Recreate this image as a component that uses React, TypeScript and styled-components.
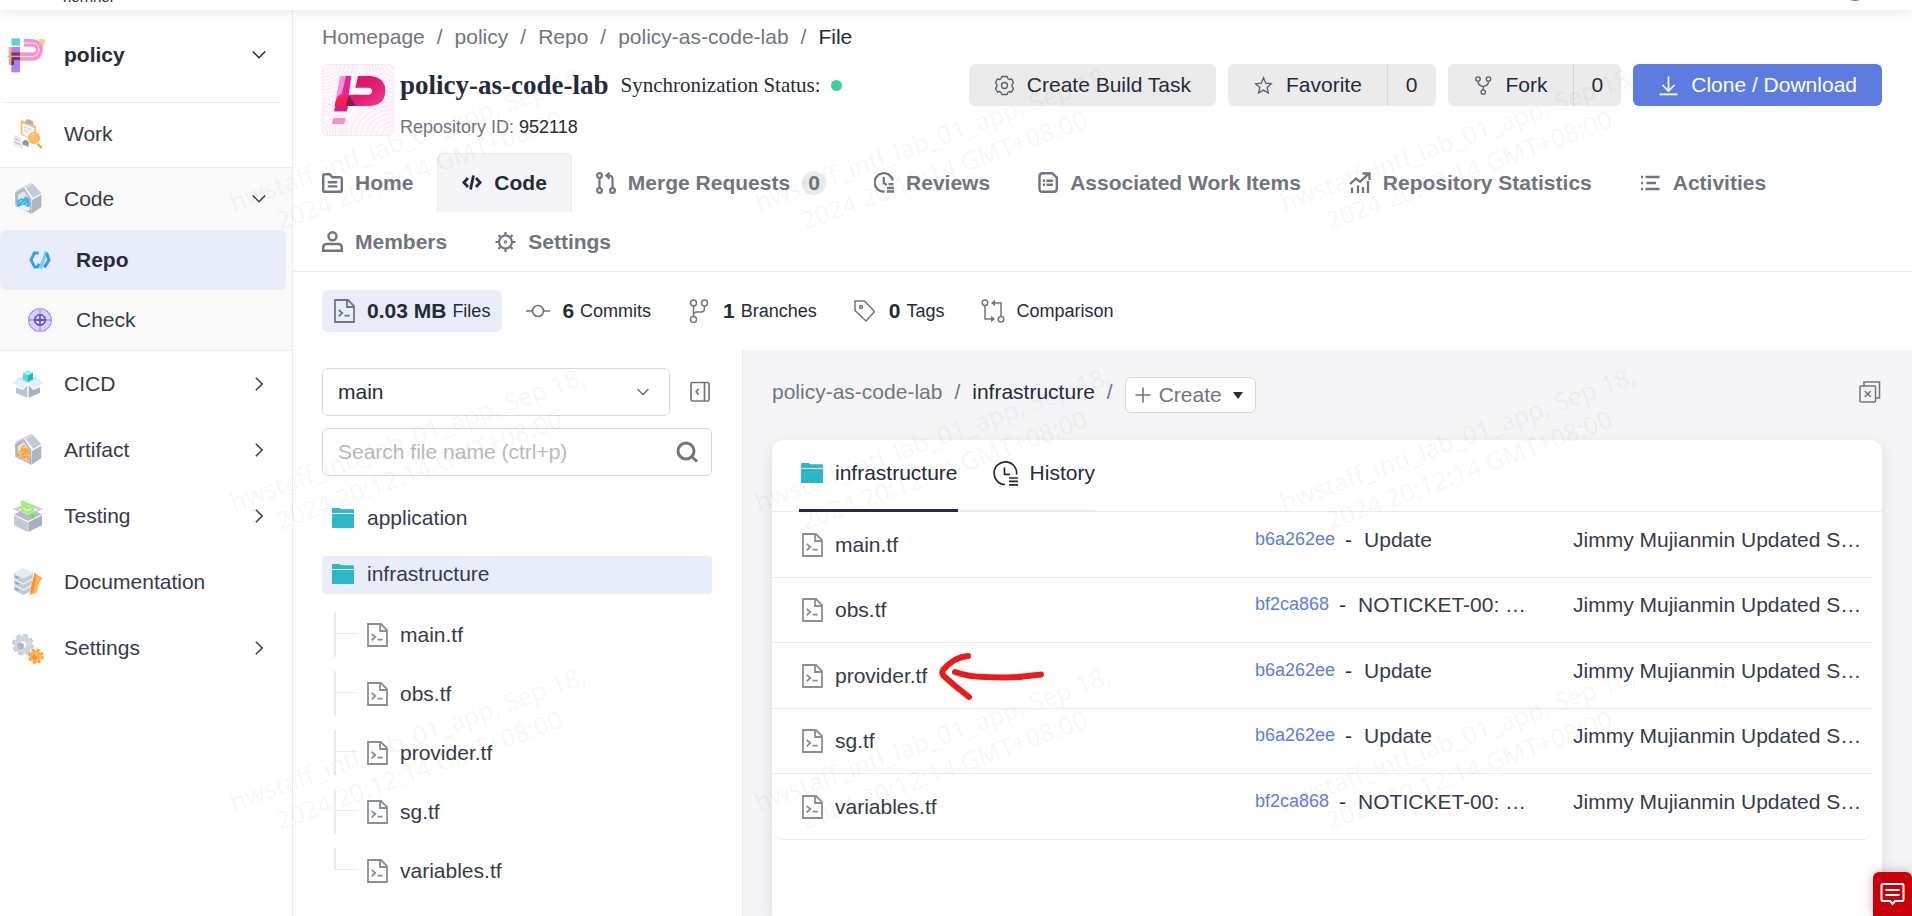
import React from "react";
import styled, { createGlobalStyle, css } from "styled-components";

const ink = "#252b3a";
const body = "#353b4a";
const muted = "#71757f";
const line = "#ebebf0";
const brand = "#5e7ce0";
const tint = "#e9edfa";
const panel = "#f5f5f8";

const Global = createGlobalStyle`
  *, *::before, *::after { box-sizing: border-box; }
  body {
    margin: 0;
    background: #fff;
    color: ${ink};
    font-family: "Liberation Sans", Arial, sans-serif;
    font-size: 21px;
    line-height: 30px;
  }
  a { color: inherit; text-decoration: none; }
  button, input, select { font: inherit; color: inherit; margin: 0; }
  button { border: 0; background: none; padding: 0; cursor: pointer; }
  svg { display: block; flex: none; }
  ul, ol { list-style: none; margin: 0; padding: 0; }
`;

/* ---------- shell ---------- */

const Page = styled.div`
  position: relative;
  display: flex;
  flex-direction: column;
  min-height: 100vh;
  overflow: hidden;
`;

const TopBar = styled.header`
  height: 10px;
  background: #fff;
  box-shadow: 0 2px 12px rgba(37, 43, 58, 0.12);
  z-index: 1;
`;

const TopBarInner = styled.div`
  display: flex;
  justify-content: space-between;
  align-items: flex-end;
  height: 2px;
  padding: 0 45px 0 63px;
  overflow: hidden;
  font-size: 15px;
  line-height: 10px;
`;

const Avatar = styled.span`
  width: 24px;
  height: 24px;
  border-radius: 50%;
  background: ${brand};
  margin-bottom: 1px;
`;

const Shell = styled.div`
  display: flex;
  flex: 1;
`;

/* ---------- sidebar ---------- */

const Sidebar = styled.nav`
  flex: none;
  width: 293px;
  border-right: 1px solid ${line};
`;

const Project = styled.button`
  display: flex;
  align-items: center;
  gap: 18px;
  width: 276px;
  height: 93px;
  margin-left: 4px;
  padding: 0 14px 3px 2px;
  border-bottom: 1px solid ${line};
  font-weight: 700;
  text-align: left;
`;

const ItemLabel = styled.span`
  flex: 1;
`;

const NavItem = styled.a<{ $h?: number }>`
  display: flex;
  align-items: center;
  gap: 20px;
  height: ${(p) => p.$h ?? 66}px;
  padding: 0 26px 0 12px;
  color: ${body};
`;

const NavGroup = styled.div`
  margin-top: 2px;
  border-top: 1px solid ${line};
  border-bottom: 1px solid ${line};
  background: #fafafa;
`;

const SubItem = styled.a<{ $active?: boolean }>`
  display: flex;
  align-items: center;
  gap: 24px;
  height: 60px;
  margin-right: 6px;
  padding-left: 28px;
  border-radius: 6px;
  color: ${body};
  ${(p) => p.$active && css`background: ${tint}; color: ${ink}; font-weight: 700;`}
`;

/* ---------- repository head ---------- */

const Main = styled.main`
  display: flex;
  flex-direction: column;
  flex: 1;
  min-width: 0;
`;

const Head = styled.div`
  padding: 12px 30px 0 29px;
  border-bottom: 1px solid ${line};
`;

const Crumbs = styled.ol`
  display: flex;
  align-items: center;
  color: ${muted};
  li + li::before { content: "/"; margin: 0 12px; color: ${muted}; }
  [aria-current] { color: ${ink}; }
`;

const TitleRow = styled.div`
  display: flex;
  justify-content: space-between;
  align-items: flex-start;
  margin-top: 12px;
`;

const Identity = styled.div`
  display: flex;
  gap: 6px;
`;

const TitleLine = styled.div`
  display: flex;
  align-items: center;
  height: 42px;
  font-family: "Liberation Serif", "Times New Roman", serif;
`;

const RepoName = styled.h1`
  margin: 0 12px 0 0;
  font-size: 27px;
`;

const StatusDot = styled.span`
  width: 11px;
  height: 11px;
  margin-left: 10px;
  border-radius: 50%;
  background: #3dcca6;
`;

const RepoId = styled.p`
  margin: 6px 0 0;
  font-size: 18px;
  color: ${muted};
  b { color: ${ink}; font-weight: 400; }
`;

const Actions = styled.div`
  display: flex;
  gap: 12px;
`;

const ActionGroup = styled.div`
  display: flex;
  border-radius: 6px;
  overflow: hidden;
`;

const ActionButton = styled.button<{ $primary?: boolean }>`
  display: flex;
  align-items: center;
  gap: 12px;
  height: 42px;
  padding: 0 25px;
  background: ${(p) => (p.$primary ? brand : "#ebebeb")};
  color: ${(p) => (p.$primary ? "#fff" : ink)};
  white-space: nowrap;
  svg { color: ${(p) => (p.$primary ? "#fff" : "#575d6c")}; }
`;

const CountButton = styled.button`
  height: 42px;
  padding: 0 18px;
  border-left: 1px solid #d7d8da;
  background: #ebebeb;
`;

const Tabs = styled.nav`
  display: flex;
  flex-wrap: wrap;
  margin: 11px 0 0 -24px;
`;

const Tab = styled.a<{ $active?: boolean }>`
  display: flex;
  align-items: center;
  gap: 12px;
  height: 59px;
  padding: 0 24px;
  color: ${(p) => (p.$active ? ink : muted)};
  font-weight: 700;
  ${(p) => p.$active && css`
    border: 1px solid ${line};
    border-bottom: 0;
    border-radius: 6px 6px 0 0;
    background: ${panel};
  `}
`;

const Badge = styled.span`
  width: 24px;
  height: 24px;
  border-radius: 12px;
  background: #ebebeb;
  line-height: 24px;
  text-align: center;
`;

const Stats = styled.div`
  display: flex;
  gap: 12px;
  padding: 18px 29px;
`;

const Stat = styled.a<{ $active?: boolean }>`
  display: flex;
  align-items: center;
  height: 42px;
  padding: 0 12px;
  border-radius: 6px;
  font-size: 18px;
  background: ${(p) => (p.$active ? tint : "none")};
  color: ${ink};
  svg { margin-right: 12px; color: ${muted}; }
  b { margin-right: 6px; font-size: 21px; }
`;

/* ---------- file tree ---------- */

const Columns = styled.div`
  display: flex;
  flex: 1;
`;

const TreePane = styled.aside`
  flex: none;
  width: 449px;
  padding: 18px 30px 18px 29px;
`;

const BranchRow = styled.div`
  display: flex;
  align-items: center;
  gap: 20px;
`;

const Field = styled.div`
  position: relative;
  flex: 1;
  height: 48px;
  color: ${muted};
  > svg { position: absolute; right: 20px; top: 50%; transform: translateY(-50%); pointer-events: none; }
  & > svg.search { right: 14px; }
`;

const controlStyle = css`
  width: 100%;
  height: 48px;
  padding: 0 15px;
  border: 1px solid #d7d8da;
  border-radius: 6px;
  background: #fff;
  color: ${ink};
  outline: 0;
`;

const BranchSelect = styled.select`
  ${controlStyle}
  appearance: none;
`;

const SearchInput = styled.input`
  ${controlStyle}
  &::placeholder { color: #b8babf; opacity: 1; }
`;

const SearchField = styled(Field)`
  margin-top: 12px;
`;

const Folders = styled.ul`
  display: flex;
  flex-direction: column;
  gap: 19px;
  margin-top: 23px;
  color: ${body};
`;

const FolderRow = styled.a<{ $active?: boolean }>`
  display: flex;
  align-items: center;
  gap: 13px;
  height: 38px;
  padding-left: 10px;
  border-radius: 4px;
  ${(p) => p.$active && css`background: ${tint}; border-bottom: 2px solid #ededf2;`}
`;

const Files = styled.ul`
  display: flex;
  flex-direction: column;
  gap: 14px;
  margin: 18px 0 0 12px;
`;

const FileNode = styled.li`
  display: flex;
  height: 45px;
  border-left: 2px solid ${line};
  &::before {
    content: "";
    width: 22px;
    height: 22px;
    margin-right: 9px;
    border-bottom: 1px solid ${line};
  }
  &:last-child { border-image: linear-gradient(${line} 22px, transparent 22px) 1; border-width: 0 0 0 2px; }
  a { display: flex; align-items: center; gap: 12px; }
`;

/* ---------- listing ---------- */

const Browser = styled.section`
  display: flex;
  flex-direction: column;
  flex: 1;
  min-width: 0;
  padding: 27px 30px 0 29px;
  border-left: 1px solid ${line};
  background: ${panel};
`;

const PathBar = styled.div`
  display: flex;
  justify-content: space-between;
  align-items: flex-start;
`;

const PathLine = styled.div`
  display: flex;
  align-items: flex-start;
`;

const PathEnd = styled.span`
  margin: 0 12px;
  color: ${muted};
`;

const CreateButton = styled.button`
  display: flex;
  align-items: center;
  height: 36px;
  padding: 0 12px 0 9px;
  border: 1px solid #d7d8da;
  border-radius: 6px;
  background: #fff;
  color: ${muted};
  span { margin: 0 11px 0 8px; }
`;

const IconButton = styled.button`
  color: ${muted};
`;

const CloseAll = styled(IconButton)`
  padding: 4px 1px 0 0;
`;

const Card = styled.div`
  flex: 1;
  margin-top: 27px;
  border-radius: 12px 12px 0 0;
  background: #fff;
  box-shadow: 0 6px 15px rgba(37, 43, 58, 0.12);
`;

const CardTabs = styled.div`
  display: flex;
  height: 72px;
  padding-left: 27px;
  border-bottom: 1px solid ${line};
`;

const CardTab = styled.button<{ $active?: boolean }>`
  display: flex;
  align-items: center;
  gap: 12px;
  height: 72px;
  padding-bottom: ${(p) => (p.$active ? 3 : 4)}px;
  padding-left: ${(p) => (p.$active ? 2 : 35)}px;
  border-bottom: ${(p) => (p.$active ? `3px solid ${ink}` : `2px solid ${line}`)};
  color: ${ink};
`;

const FileTable = styled.table`
  width: calc(100% - 9px);
  table-layout: fixed;
  border-spacing: 0;
  color: ${body};
`;

const Row = styled.tr`
  height: 66px;
  &:nth-child(even) { height: 65px; }
  td { padding: 0; border-bottom: 1px solid ${line}; white-space: nowrap; vertical-align: middle; }
  &:last-child td:first-child { border-bottom-left-radius: 12px; }
  &:last-child td:last-child { border-bottom-right-radius: 12px; }
`;

const CommitCol = styled.col`
  width: 318px;
`;

const UpdatedCol = styled.col`
  width: 300px;
`;

const FileCell = styled.a`
  position: relative;
  display: flex;
  align-items: center;
  gap: 12px;
  width: max-content;
  margin-left: 30px;
`;

const Arrow = styled.svg`
  position: absolute;
  left: calc(100% + 12px);
  top: -9px;
  overflow: visible;
`;

const Commit = styled.div`
  display: flex;
  align-items: center;
  padding-bottom: 10px;
  a { font-size: 18px; color: ${brand}; margin-top: -2px; }
  i { margin: 0 12px 0 10px; font-style: normal; color: ${ink}; }
`;

const Updated = styled.div`
  padding-bottom: 10px;
`;

/* ---------- overlays ---------- */

const Watermarks = styled.div`
  position: absolute;
  left: 151px;
  top: 4px;
  display: grid;
  grid-template-columns: repeat(3, 525px);
  grid-auto-rows: 300px;
  place-items: center;
  z-index: 3;
  pointer-events: none;
  user-select: none;
`;

const Mark = styled.span`
  color: rgba(0, 0, 0, 0.055);
  font-family: "Noto Sans", "Open Sans", sans-serif;
  font-size: 25px;
  line-height: 33px;
  text-align: center;
  white-space: pre;
  transform: rotate(-20deg);
`;

const Feedback = styled.button`
  position: fixed;
  right: 0;
  bottom: 0;
  z-index: 4;
  display: grid;
  place-items: center;
  width: 39px;
  height: 44px;
  border-radius: 6px 6px 0 0;
  background: #c7000b;
  color: #fff;
  box-shadow: 0 0 12px rgba(0, 0, 0, 0.25);
`;

/* ---------- icons ---------- */

const Svg = ({ w = 20, h = w, vb, sw = 2, children }: { w?: number; h?: number; vb?: string; sw?: number; children: React.ReactNode }) => (
  <svg width={w} height={h} viewBox={vb ?? `0 0 ${w} ${h}`} fill="none" stroke="currentColor" strokeWidth={sw} aria-hidden="true">
    {children}
  </svg>
);

const Chevron = ({ down }: { down?: boolean }) => (
  <Svg w={14} h={14} sw={1.5}>
    <path d={down ? "M.8 3.500 7 9.800l6.200-6.300" : "M3.800 .8 10.200 7l-6.400 6.200"} />
  </Svg>
);

const FileIcon = ({ color = "#8a8e99" }: { color?: string }) => (
  <svg width="21" height="24" viewBox="0 0 21 24" fill="none" stroke={color} strokeWidth="1.8" aria-hidden="true">
    <path d="M1 1h13l6 6v16H1zM13 1v7h7M4.700 10.800 8.300 14l-3.600 3.400M10.500 16.600h5.200" />
  </svg>
);

const FolderIcon = () => (
  <svg width="22" height="20" viewBox="0 0 22 20" fill="#2db7c8" aria-hidden="true">
    <path d="M0 .5Q0 0 .5 0h7.300l1.400 1.200h12.300q.5 0 .5.5V5H0zM0 6h22v13.400q0 .6-.6.6H.6q-.6 0-.6-.6z" />
  </svg>
);

const PolicyLogo = () => (
  <svg width="40" height="40" viewBox="20 104 120 120" aria-hidden="true">
    <path d="M118 116q12-2 20 4-4 20-16 30z" fill="#e8d67a" />
    <path d="M28 140h8v55h-8z" fill="#f4a98a" />
    <path d="M36 114h26v22H36z" fill="#62d3de" />
    <path d="M36 140h26v76H36z" fill="#b07ff2" />
    <path d="M74 116h26q30 4 31 32-2 30-32 33H36v-25h64q10-1 10-8t-10-9H74z" fill="#ff8fcb" />
    <path d="M74 128h26q18 3 19 20-2 18-20 21H62" fill="none" stroke="#fff" strokeWidth="3" />
    <path d="M36 156h26v24H36z" fill="#8f2d74" />
    <path d="M36 180h8v14h-8z" fill="#5b2f86" />
    <path d="M24 168h38" stroke="#9ed36a" strokeWidth="4" />
  </svg>
);

const WorkIcon = () => (
  <svg width="32" height="32" viewBox="36 352 96 96" aria-hidden="true">
    <path d="M62 358l46 18v44l-46-18z" fill="#f9b765" />
    <path d="M67 367l36 14v36l-36-16z" fill="#f3f5fa" />
    <path d="M76 360q6-8 16-2l8 6v10l-22-8z" fill="#a9afbb" />
    <path d="M72 378l22 10M72 388l14 6" stroke="#c9cfda" strokeWidth="3" />
    <path d="M42 402l26 12v32l-28-12z" fill="#e6edf8" />
    <path d="M44 414l14 6M44 424l18 8" stroke="#b5bcc9" strokeWidth="3" />
    <path d="M68 424q8-14 18 0v14l-18-6z" fill="#8e96a6" />
    <circle cx="102" cy="412" r="16" fill="#ffc069" stroke="#ffaf4a" strokeWidth="4" />
    <path d="M92 406q6-10 14-8" fill="none" stroke="#ffe2b3" strokeWidth="3" />
    <path d="M112 429l13 13" stroke="#fba63c" strokeWidth="7" />
  </svg>
);

const House = () => (
  <>
    <path d="M45 580l27-18 22 34v46l-48-24z" fill="#b0b7c5" />
    <path d="M54 586l18-12 16 24v36l-34-18z" fill="#e1e5ed" />
    <path d="M45 579l5-8 42-20 7 2-26 11z" fill="#ccd2dd" />
    <path d="M77 565l22-12 25 28-24 14z" fill="#c3cad8" />
    <path d="M96 601l28-16v37l-30 21z" fill="#adb4c3" />
    <path d="M73 564l23 34 28-16" fill="none" stroke="#f4f6fa" strokeWidth="3" />
  </>
);

const CodeIcon = () => (
  <svg width="32" height="32" viewBox="36 550 96 96" aria-hidden="true">
    <House />
    <path d="M52 602l12-6 6 2 6-8 12 8v22l-18 8-18-10z" fill="#3fb4ec" />
    <path d="M56 608l10-6M66 613l10-8M73 618l9-6" stroke="#b7e6fb" strokeWidth="3" />
    <path d="M54 622l16-6 20 8-4 10-12-2z" fill="#e9f7fe" />
  </svg>
);

const ArtifactIcon = () => (
  <svg width="32" height="32" viewBox="36 550 96 96" aria-hidden="true">
    <House />
    <path d="M52 604l10-6v-10l10-5 16 16v32l-18-8-18-8z" fill="#ffa63d" />
    <path d="M52 604l9 4 9-5M70 616l9-5 9 5M61 608v10M79 620v10M62 588l9 4 8-3" stroke="#ffd9a3" strokeWidth="3" fill="none" />
  </svg>
);

const CicdIcon = () => (
  <svg width="32" height="32" viewBox="36 90 96 96" aria-hidden="true">
    <path d="M48 148l20 8 14-14v37l-34-14z" fill="#bcc4d1" />
    <path d="M120 148l-20 8-14-14v37l34-14z" fill="#a9b1c0" />
    <path d="M52 122l32 14 32-14-32-10z" fill="#d4dae5" />
    <path d="M38 136l14-15 31 15-15 18zM130 136l-14-15-31 15 15 18z" fill="#e6eefa" />
    <path d="M84 96l15 8-15 8-15-8z" fill="#9df2ec" />
    <path d="M69 104l15 8v20l-15-8z" fill="#4fdcd6" />
    <path d="M99 104l-15 8v20l15-8z" fill="#17bfc4" />
  </svg>
);

const TestingIcon = () => (
  <svg width="32" height="34" viewBox="36 482 96 102" aria-hidden="true">
    <path d="M84 496l38 16-38 18-38-18z" fill="#fff" stroke="#c3cad6" strokeWidth="5" />
    <path d="M42 528l42-18 42 18-42 20z" fill="#b4bbc9" />
    <path d="M84 500l34 13-34 16-34-16z" fill="#fff" stroke="#c9cfda" strokeWidth="5" />
    <path d="M42 531l41 21v29l-41-20z" fill="#c3cad6" />
    <path d="M126 531l-41 21v29l41-20z" fill="#a8b0bf" />
    <path d="M63 484l39 18v22l-12 6-27-12z" fill="#a6ec78" />
    <path d="M90 530l12-5v18z" fill="#7fd34c" />
    <path d="M71 510q12 12 22 2" fill="none" stroke="#f4ffe9" strokeWidth="4" />
  </svg>
);

const DocsIcon = () => (
  <svg width="32" height="32" viewBox="36 682 96 96" aria-hidden="true">
    {[740, 722, 704].map((y) => (
      <g key={y}>
        <path d={`M42 ${y}l28 12 28-12v14l-28 16-28-16z`} fill="#c3cad6" />
        <path d={`M70 ${y - 16}l28 14v4l-28 14-28-14v-4z`} fill="#e4ecf8" />
        <path d={`M46 ${y + 9}l10 5`} stroke="#8e96a6" strokeWidth="4" />
      </g>
    ))}
    <path d="M103 700l28 17-19 46-26 9z" fill="#fff" />
    <path d="M104 703l24 15-10 14-8 30-20 7 8-14z" fill="#ffb45a" />
    <path d="M104 703l4 3-6 48-13 15 4-24z" fill="#ff8f22" />
  </svg>
);

const GearsIcon = () => (
  <svg width="32" height="33" viewBox="36 876 99 102" fill="none" aria-hidden="true">
    <circle cx="70" cy="915" r="28" stroke="#c3cad8" strokeWidth="11" strokeDasharray="14 8" />
    <circle cx="70" cy="915" r="19" stroke="#d0d6e1" strokeWidth="18" />
    <circle cx="63" cy="919" r="10" fill="#aeb6c5" />
    <circle cx="110" cy="951" r="20" stroke="#fb9a35" strokeWidth="8" strokeDasharray="9 6.7" />
    <circle cx="109" cy="951" r="12" stroke="#ffb04f" strokeWidth="14" />
    <circle cx="106" cy="954" r="7" fill="#f58a1f" />
  </svg>
);

const RepoIcon = () => (
  <svg width="24" height="24" viewBox="84 742 72 72" fill="none" strokeWidth="9" aria-hidden="true">
    <path d="M116 757h-13l-10 21 11 21h8l6-10" stroke="#33a3e6" />
    <path d="M139 752l-18 52" stroke="#6fd0fb" strokeWidth="10" />
    <path d="M140 758l7 20-14 22" stroke="#2b9be4" />
  </svg>
);

const CheckIcon = () => (
  <svg width="24" height="24" viewBox="84 924 72 72" fill="none" aria-hidden="true">
    <circle cx="120" cy="960" r="34" fill="#dccff8" stroke="#a49cf2" strokeWidth="4" />
    <path d="M120 926v68M86 960h68" stroke="#9d96ee" strokeWidth="4" />
    <circle cx="120" cy="960" r="16" stroke="#4b41b6" strokeWidth="4" />
    <path d="M120 944v32M104 960h32" stroke="#4b41b6" strokeWidth="4" />
  </svg>
);

const RepoLogo = () => (
  <svg width="72" height="72" viewBox="966 192 216 216" aria-hidden="true">
    <defs>
      <clipPath id="tile"><rect x="966" y="192" width="216" height="216" rx="16" /></clipPath>
      <linearGradient id="bowl" x1="0" y1="0" x2="1" y2="1">
        <stop offset="0" stopColor="#c91b70" />
        <stop offset=".5" stopColor="#e11a6e" />
        <stop offset="1" stopColor="#ee3f96" />
      </linearGradient>
    </defs>
    <rect x="967" y="193" width="214" height="214" rx="16" fill="#fef8fc" stroke="#f9e3f3" strokeWidth="3" />
    <g clipPath="url(#tile)" fill="none" stroke="#fbe4f3" strokeWidth="3">
      {[20, 32, 44, 56, 68, 80, 92, 104].map((r) => (
        <g key={r}>
          <ellipse cx="966" cy="196" rx={r} ry={r * 0.8} />
          <ellipse cx="1186" cy="408" rx={r * 1.3} ry={r} />
          <ellipse cx="1180" cy="186" rx={r * 0.8} ry={r} />
          <ellipse cx="968" cy="400" rx={r * 0.7} ry={r} />
        </g>
      ))}
    </g>
    <path d="M1022 228h32l-14 106h-37l9-56z" fill="#e0279a" />
    <path d="M1020 228h18l-12 52-16 12z" fill="#f592cd" />
    <path d="M1074 228h36q46 4 46 44 0 42-46 46h-74l12-34h58q10-1 10-11 0-9-10-10h-40z" fill="url(#bowl)" />
    <path d="M1008 300l36-18-8 36h-33z" fill="#fb2049" />
    <path d="M1046 284l22 34h-30z" fill="#7d1f50" />
    <path d="M1037 318h7l-3 16h-38l3-16z" fill="#c82391" />
    <path d="M1000 354h37l-4 18h-37z" fill="#f592cd" />
  </svg>
);

const HomeIcon = () => (
  <Svg w={21} h={20} sw={2.4}><path d="M1.200 17V2.800Q1.200 1.200 2.800 1.200h5l2.600 3h7.700Q19.800 4.200 19.800 5.800v11.400q0 1.600-1.600 1.600H2.800Q1.200 18.800 1.200 17.200zM5.800 9.200h9.400M5.800 13.400h9.400" /></Svg>
);
const CodeTabIcon = () => (
  <Svg w={20} h={20} sw={2.8}><path d="M6 5 1.800 9.500 6 14M14 5l4.200 4.500L14 14M11.500 2.500l-3 14" /></Svg>
);
const MergeIcon = () => (
  <Svg w={20} h={22} sw={2.2}><circle cx="3.500" cy="3.500" r="2.400" /><circle cx="3.500" cy="18.500" r="2.400" /><circle cx="16.500" cy="18.500" r="2.400" /><path d="M3.500 6v10M16.500 16V7q0-3.500-3.500-3.500H11M13.500 .8 10.500 3.600 13.500 6.600" /></Svg>
);
const ReviewIcon = () => (
  <Svg w={20} h={21} sw={2.3}><path d="M10.500 19.600A9.200 9.200 0 1 1 18.800 8.500M9.800 5v6l3 2M14.500 12.200h5M13 16h7M13 19.500h7" /></Svg>
);
const WorkItemsIcon = () => (
  <Svg w={20} h={21} sw={2.4}><path d="M4.500 1.200h9.500L18.800 5.500v11q0 3.300-3 3.300H4.500q-3 0-3-3.300V4.500q0-3.300 3-3.300zM5 8.800h2M8.500 8.800h6.500M5 12.800h2M8.500 12.800h6.500" /></Svg>
);
const StatsIcon = () => (
  <Svg w={22} h={21} sw={2.3}><path d="M1 12 7 6.500l4 3.300 8-7.500M13.500 1.500H20.500V8M3 15.500v5.500M9 13.500v7.500M14 15v6M19 9v12" /></Svg>
);
const ListIcon = () => (
  <Svg w={21} h={20} sw={2.4}><path d="M1 4h2M5.500 4H19.500M1 10h2M6.500 10h9.500M1 16h2M5.500 16H19.500" /></Svg>
);
const MemberIcon = () => (
  <Svg w={21} h={21} sw={2.4}><circle cx="10.500" cy="5.200" r="4" /><path d="M1.200 19.800v-3.300q0-3.500 3.500-3.500h11.600q3.500 0 3.500 3.500V19.800z" /></Svg>
);
const CogIcon = () => (
  <Svg w={21} h={20} sw={2.2}>
    <circle cx="10.500" cy="10" r="6.500" />
    <circle cx="10.500" cy="10" r=".6" />
    <path d="M10.500 0v3M10.500 17v3M.5 10h3M17.500 10h3M3.500 3l2 2M15.500 15l2 2M17.500 3l-2 2M5.500 15l-2 2" />
  </Svg>
);
const BuildIcon = () => (
  <Svg w={21} h={21} sw={1.3}>
    <circle cx="10.500" cy="10.500" r="3" />
    <path d="M7.800 1.500h5.400l.8 2.300 1.200.7 2.400-.5 1.900 3.600-1.500 2v1.800l1.500 2-1.900 3.600-2.400-.5-1.200.7-.8 2.300H7.800L7 17.200l-1.200-.7-2.400.5-1.900-3.600 1.500-2V9.600l-1.500-2L3.400 4l2.400.5L7 3.800z" strokeLinejoin="round" />
  </Svg>
);
const StarIcon = () => (
  <Svg w={21} h={21} sw={1.3}><path d="M10.500 2.800 12.700 8.200l5.600.5-4.200 3.800 1.300 5.500-4.900-2.900-4.900 2.900 1.300-5.500-4.200-3.800 5.600-.5z" /></Svg>
);
const ForkIcon = () => (
  <Svg w={21} h={21} sw={1.3}><circle cx="5" cy="4" r="2.200" /><circle cx="15.500" cy="4" r="2.200" /><circle cx="10.200" cy="17" r="2.200" /><path d="M5 6.200q0 4.500 5.200 5.200 5.300-.7 5.300-5.200M10.200 11.400v3.400" /></Svg>
);
const DownloadIcon = () => (
  <Svg w={21} h={21} sw={1.7}><path d="M10.500 1.500v14M4.500 10l6 6 6-6M1.500 19.300h18" /></Svg>
);
const CommitIcon = () => (
  <Svg w={24} sw={1.7}><circle cx="12" cy="12" r="5.500" /><path d="M0 12h6.500M17.500 12H24" /></Svg>
);
const BranchIcon = () => (
  <Svg w={24} sw={1.5}><circle cx="6.500" cy="4" r="3" /><circle cx="17.500" cy="4" r="3" /><circle cx="6.500" cy="20.500" r="3" /><path d="M6.500 7v10.500M17.500 7v2.500q0 3.500-3.500 3.500h-4q-3.500 0-3.500 3" /></Svg>
);
const TagIcon = () => (
  <Svg w={24} sw={1.5}><path d="M2 2h9.500L21.500 12.500 13 22 2 11.500z" strokeLinejoin="round" /><circle cx="8" cy="8" r="1.500" /></Svg>
);
const CompareIcon = () => (
  <Svg w={24} sw={1.5}><circle cx="4" cy="3.800" r="2.800" /><circle cx="20" cy="20.200" r="2.800" /><path d="M4 6.600V20h8.500M20 17.400V4h-8" /><path d="M10 4l4-3.200v6.400zM14 20l-4-3.200v6.400z" fill="currentColor" stroke="none" /></Svg>
);
const CollapseIcon = () => (
  <Svg w={22} h={22} sw={1.7}><rect x="1" y="1.500" width="18" height="18.500" rx="1.500" /><path d="M14.500 1.500V20M8.600 7.800 6.200 10.700l2.400 3" /></Svg>
);
const SearchIcon = () => (
  <svg className="search" width="22" height="22" viewBox="0 0 22 22" fill="none" stroke="currentColor" strokeWidth="3" aria-hidden="true">
    <circle cx="10" cy="10" r="8" /><path d="M15.500 15.500 21 20.500" />
  </svg>
);
const HistoryIcon = () => (
  <Svg w={25} h={25} sw={1.7}><path d="M12 23.500A11.300 11.300 0 1 1 23.600 13.500M11.500 6.500v6.800h5.500M16 17h9M16 20.400h9M16 23.800h9" /></Svg>
);
const CloseAllIcon = () => (
  <Svg w={22} h={22} sw={1.5}><path d="M5 5V1h15.500v16h-4" /><rect x="1" y="5" width="15.500" height="16" rx="1" /><path d="m5.700 10 6 6M11.700 10l-6 6" /></Svg>
);
const MessageIcon = () => (
  <Svg w={25} h={24} sw={2}><path d="M3 2h19q1.500 0 1.500 1.500v14q0 1.500-1.500 1.500h-7l-2.500 3-2.500-3H3q-1.500 0-1.500-1.500v-14Q1.500 2 3 2zM5.500 8h14M5.500 13h14" /></Svg>
);

/* ---------- data ---------- */

const tabs = [
  { label: "Home", icon: <HomeIcon /> },
  { label: "Code", icon: <CodeTabIcon />, active: true },
  { label: "Merge Requests", icon: <MergeIcon />, count: 0 },
  { label: "Reviews", icon: <ReviewIcon /> },
  { label: "Associated Work Items", icon: <WorkItemsIcon /> },
  { label: "Repository Statistics", icon: <StatsIcon /> },
  { label: "Activities", icon: <ListIcon /> },
  { label: "Members", icon: <MemberIcon /> },
  { label: "Settings", icon: <CogIcon /> },
];

const stats = [
  { value: "0.03 MB", label: "Files", icon: <FileIcon color={muted} />, active: true },
  { value: "6", label: "Commits", icon: <CommitIcon /> },
  { value: "1", label: "Branches", icon: <BranchIcon /> },
  { value: "0", label: "Tags", icon: <TagIcon /> },
  { label: "Comparison", icon: <CompareIcon /> },
];

const modules = [
  { label: "CICD", icon: <CicdIcon />, more: true },
  { label: "Artifact", icon: <ArtifactIcon />, more: true },
  { label: "Testing", icon: <TestingIcon />, more: true },
  { label: "Documentation", icon: <DocsIcon /> },
  { label: "Settings", icon: <GearsIcon />, more: true },
];

const files = [
  { name: "main.tf", hash: "b6a262ee", message: "Update" },
  { name: "obs.tf", hash: "bf2ca868", message: "NOTICKET-00: …" },
  { name: "provider.tf", hash: "b6a262ee", message: "Update", marked: true },
  { name: "sg.tf", hash: "b6a262ee", message: "Update" },
  { name: "variables.tf", hash: "bf2ca868", message: "NOTICKET-00: …" },
];

export default function App() {
  return (
    <Page>
      <Global />
      <TopBar>
        <TopBarInner>
          <span>nernner</span>
          <Avatar />
        </TopBarInner>
      </TopBar>
      <Shell>
        <Sidebar aria-label="Project">
          <Project>
            <PolicyLogo />
            <ItemLabel>policy</ItemLabel>
            <Chevron down />
          </Project>
          <NavItem href="#work" $h={62}><WorkIcon /><ItemLabel>Work</ItemLabel></NavItem>
          <NavGroup>
            <NavItem href="#code" $h={62}><CodeIcon /><ItemLabel>Code</ItemLabel><Chevron down /></NavItem>
            <SubItem href="#repo" $active><RepoIcon />Repo</SubItem>
            <SubItem href="#check"><CheckIcon />Check</SubItem>
          </NavGroup>
          {modules.map((m) => (
            <NavItem key={m.label} href={`#${m.label}`}>
              {m.icon}<ItemLabel>{m.label}</ItemLabel>{m.more && <Chevron />}
            </NavItem>
          ))}
        </Sidebar>

        <Main>
          <Head>
            <Crumbs>
              <li><a href="#home">Homepage</a></li>
              <li><a href="#policy">policy</a></li>
              <li><a href="#repo">Repo</a></li>
              <li><a href="#lab">policy-as-code-lab</a></li>
              <li aria-current="page">File</li>
            </Crumbs>
            <TitleRow>
              <Identity>
                <RepoLogo />
                <div>
                  <TitleLine>
                    <RepoName>policy-as-code-lab</RepoName>
                    <span>Synchronization Status:</span>
                    <StatusDot />
                  </TitleLine>
                  <RepoId>Repository ID: <b>952118</b></RepoId>
                </div>
              </Identity>
              <Actions>
                <ActionGroup><ActionButton><BuildIcon />Create Build Task</ActionButton></ActionGroup>
                <ActionGroup><ActionButton><StarIcon />Favorite</ActionButton><CountButton>0</CountButton></ActionGroup>
                <ActionGroup><ActionButton><ForkIcon />Fork</ActionButton><CountButton>0</CountButton></ActionGroup>
                <ActionGroup><ActionButton $primary><DownloadIcon />Clone / Download</ActionButton></ActionGroup>
              </Actions>
            </TitleRow>
            <Tabs aria-label="Repository">
              {tabs.map((t) => (
                <Tab key={t.label} href={`#${t.label}`} $active={t.active}>
                  {t.icon}{t.label}{t.count !== undefined && <Badge>{t.count}</Badge>}
                </Tab>
              ))}
            </Tabs>
          </Head>

          <Stats>
            {stats.map((s) => (
              <Stat key={s.label} href={`#${s.label}`} $active={s.active}>
                {s.icon}{s.value && <b>{s.value}</b>}<span>{s.label}</span>
              </Stat>
            ))}
          </Stats>

          <Columns>
            <TreePane>
              <BranchRow>
                <Field>
                  <BranchSelect aria-label="Branch" defaultValue="main"><option>main</option></BranchSelect>
                  <Svg w={14} h={14} sw={1.5}><path d="M1.500 4 7 9.600 12.500 4" /></Svg>
                </Field>
                <IconButton aria-label="Collapse tree"><CollapseIcon /></IconButton>
              </BranchRow>
              <SearchField>
                <SearchInput aria-label="Search file name" placeholder="Search file name (ctrl+p)" />
                <SearchIcon />
              </SearchField>
              <Folders>
                <li><FolderRow href="#application"><FolderIcon />application</FolderRow></li>
                <li>
                  <FolderRow href="#infrastructure" $active><FolderIcon />infrastructure</FolderRow>
                  <Files>
                    {files.map((f) => (
                      <FileNode key={f.name}><a href={`#${f.name}`}><FileIcon />{f.name}</a></FileNode>
                    ))}
                  </Files>
                </li>
              </Folders>
            </TreePane>

            <Browser>
              <PathBar>
                <PathLine>
                  <Crumbs>
                    <li><a href="#lab">policy-as-code-lab</a></li>
                    <li aria-current="page">infrastructure</li>
                  </Crumbs>
                  <PathEnd>/</PathEnd>
                  <CreateButton>
                    <Svg w={16} h={16} sw={1.6}><path d="M8 .5v15M.5 8h15" /></Svg>
                    <span>Create</span>
                    <svg width="10" height="7" viewBox="0 0 10 7" fill={ink} aria-hidden="true"><path d="M0 0h10L5 7z" /></svg>
                  </CreateButton>
                </PathLine>
                <CloseAll aria-label="Close all"><CloseAllIcon /></CloseAll>
              </PathBar>
              <Card>
                <CardTabs>
                  <CardTab $active><FolderIcon />infrastructure</CardTab>
                  <CardTab><HistoryIcon />History</CardTab>
                </CardTabs>
                <FileTable>
                  <colgroup><col /><CommitCol /><UpdatedCol /></colgroup>
                  <tbody>
                    {files.map((f) => (
                      <Row key={f.name}>
                        <td>
                          <FileCell href={`#${f.name}`}>
                            <FileIcon />{f.name}
                            {f.marked && (
                              <Arrow width="104" height="48" viewBox="0 0 104 48" fill="none" stroke="#e71d1d" strokeWidth="6" strokeLinecap="round" strokeLinejoin="round" aria-hidden="true">
                                <path d="M29 4Q15 5 4 18q-2 4 2 7l9 8 15 12M16 20q14 5 30 5 30 1 38-.5l18-2" />
                              </Arrow>
                            )}
                          </FileCell>
                        </td>
                        <td><Commit><a href={`#${f.hash}`}>{f.hash}</a><i>-</i>{f.message}</Commit></td>
                        <td><Updated>Jimmy Mujianmin Updated S…</Updated></td>
                      </Row>
                    ))}
                  </tbody>
                </FileTable>
              </Card>
            </Browser>
          </Columns>
        </Main>
      </Shell>

      <Watermarks aria-hidden="true">
        {Array.from({ length: 9 }, (_, i) => (
          <Mark key={i}>{"hwstaff_intl_lab_01_app, Sep 18,\n2024 20:12:14 GMT+08:00"}</Mark>
        ))}
      </Watermarks>
      <Feedback aria-label="Feedback"><MessageIcon /></Feedback>
    </Page>
  );
}
